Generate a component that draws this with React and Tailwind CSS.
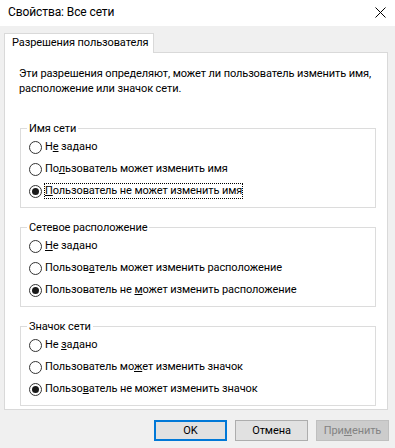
import React, { useState } from "react";

// Radio option groups
const groups = [
  {
    title: "Имя сети",
    options: [
      ["Н", "е", " задано"],
      ["По", "л", "ьзователь может изменить имя"],
      ["", "П", "ользователь не может изменить имя"],
    ],
    focus: true,
  },
  {
    title: "Сетевое расположение",
    options: [
      ["", "Н", "е задано"],
      ["Пользов", "а", "тель может изменить расположение"],
      ["Пользователь не ", "м", "ожет изменить расположение"],
    ],
  },
  {
    title: "Значок сети",
    options: [
      ["Не ", "з", "адано"],
      ["Пользователь мо", "ж", "ет изменить значок"],
      ["Пользо", "в", "атель не может изменить значок"],
    ],
  },
];

const Radio = ({ checked }) => (
  <span className="w-[13px] h-[13px] rounded-full border border-[#333333] bg-white flex items-center justify-center shrink-0">
    {checked && <span className="w-[7px] h-[7px] rounded-full bg-[#1a1a1a]" />}
  </span>
);

const Group = ({ group, value, onChange, className }) => (
  <fieldset className={"border border-[#dcdcdc] ml-[15px] mr-[11px] pb-[5px] " + className}>
    <legend className="ml-[6px] px-[2px] leading-[15px]">{group.title}</legend>
    {group.options.map((opt, i) => {
      const focused = group.focus && i === 2;
      return (
        <div
          key={i}
          onClick={() => onChange(i)}
          className="h-[22px] flex items-center pl-[8px]"
        >
          <Radio checked={value === i} />
          <span
            className={
              "ml-[2px] leading-[14px] border whitespace-nowrap " +
              (focused ? "border-dotted border-black" : "border-transparent")
            }
          >
            {opt[0]}
            <u>{opt[1]}</u>
            {opt[2]}
          </span>
        </div>
      );
    })}
  </fieldset>
);

const App = () => {
  const [values, setValues] = useState([2, 2, 2]);

  const setValue = (g, v) => {
    const next = [...values];
    next[g] = v;
    setValues(next);
  };

  return (
    <div
      className="w-[395px] h-[448px] bg-[#f0f0f0] text-[11px] tracking-[-0.1px] text-black flex flex-col overflow-hidden"
      style={{ fontFamily: 'Roboto, "Noto Sans", sans-serif' }}
    >
      {/* Title bar */}
      <div className="h-[26px] bg-white flex items-center justify-between pl-[8px] pr-[9px] shrink-0">
        <span className="leading-[15px] -mt-[2px] text-[12px]">Свойства: Все сети</span>
        <svg width="11" height="11" viewBox="0 0 11 11" className="-mt-[2px]">
          <path d="M0.5 0.5 L10.5 10.5 M10.5 0.5 L0.5 10.5" stroke="#000" strokeWidth="1" />
        </svg>
      </div>

      {/* Tab */}
      <div className="mt-[7px] ml-[4px] flex">
        <div className="w-[150px] h-[20px] bg-white border border-b-0 border-[#d9d9d9] pl-[7px] flex items-center -mb-px relative z-10 whitespace-nowrap">
          Разрешения пользователя
        </div>
      </div>

      {/* Tab panel */}
      <div className="ml-[4px] w-[384px] h-[358px] bg-white border border-[#d9d9d9] pt-[13px]">
        <p className="pl-[14px] leading-[15px] whitespace-nowrap">
          Эти разрешения определяют, может ли пользователь изменить имя,
          <br />
          расположение или значок сети.
        </p>
        {groups.map((g, i) => (
          <Group
            key={i}
            group={g}
            value={values[i]}
            onChange={(v) => setValue(i, v)}
            className={i === 0 ? "mt-[25px]" : "mt-[12px]"}
          />
        ))}
      </div>

      {/* Buttons */}
      <div className="mt-[10px] flex justify-end gap-[8px] pr-[6px]">
        <button className="w-[73px] h-[21px] bg-[#e1e1e1] border-2 border-[#0078d7] leading-none">
          OK
        </button>
        <button className="w-[73px] h-[21px] bg-[#e1e1e1] border border-[#adadad] leading-none">
          Отмена
        </button>
        <button
          disabled
          className="w-[73px] h-[21px] bg-[#cccccc] border border-[#bfbfbf] text-[#838383] leading-none"
        >
          При<u>м</u>енить
        </button>
      </div>
    </div>
  );
};

export default App;
